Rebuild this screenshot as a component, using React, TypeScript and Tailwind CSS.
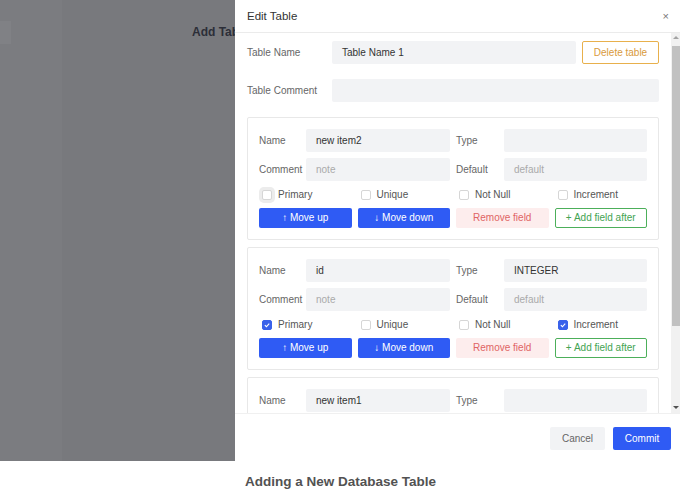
import React from "react";

type Field = {
  name: string;
  type: string;
  primary: boolean;
  increment: boolean;
  focus?: boolean;
};

const fields: Field[] = [
  { name: "new item2", type: "", primary: false, increment: false, focus: true },
  { name: "id", type: "INTEGER", primary: true, increment: true },
  { name: "new item1", type: "", primary: false, increment: false },
];

function Check({ checked, label, focus }: { checked: boolean; label: string; focus?: boolean }) {
  return (
    <div className="flex items-center gap-[6px] pl-[3px] text-[10px] leading-[12px] text-[#555]">
      <span
        className={`flex h-[10px] w-[10px] items-center justify-center rounded-[2px] border ${
          checked ? "border-[#3a62ea] bg-[#3a62ea]" : "border-[#d6d6d6] bg-white"
        } ${focus ? "ring-[3px] ring-[#ececec]" : ""}`}
      >
        {checked && (
          <svg width="8" height="8" viewBox="0 0 10 10" fill="none">
            <path d="M2.3 5.2 4.3 7.2 7.8 3.2" stroke="white" strokeWidth="1.4" />
          </svg>
        )}
      </span>
      {label}
    </div>
  );
}

function Input({ value, placeholder }: { value?: string; placeholder?: string }) {
  return (
    <div className="flex h-[23px] flex-1 items-center rounded-[2px] bg-[#f2f3f5] px-[10px] text-[10px] leading-[12px]">
      {value ? <span className="text-[#333]">{value}</span> : <span className="text-[#aaa]">{placeholder}</span>}
    </div>
  );
}

function FieldCard({ f }: { f: Field }) {
  return (
    <div className="flex shrink-0 flex-col gap-[6px] rounded-[2px] border border-[#e8e8e8] p-[11px]">
      <div className="grid grid-cols-2 gap-[6px] text-[10px] leading-[12px] text-[#666]">
        <div className="flex items-center">
          <span className="w-[47px]">Name</span>
          <Input value={f.name} />
        </div>
        <div className="flex items-center">
          <span className="w-[48px]">Type</span>
          <Input value={f.type} />
        </div>
        <div className="flex items-center">
          <span className="w-[47px]">Comment</span>
          <Input placeholder="note" />
        </div>
        <div className="flex items-center">
          <span className="w-[48px]">Default</span>
          <Input placeholder="default" />
        </div>
      </div>
      <div className="grid h-[15px] grid-cols-4 gap-[6px]">
        <Check checked={f.primary} label="Primary" focus={f.focus} />
        <Check checked={false} label="Unique" />
        <Check checked={false} label="Not Null" />
        <Check checked={f.increment} label="Increment" />
      </div>
      <div className="grid grid-cols-4 gap-[6px] text-[10px] leading-[12px]">
        <button className="h-[20px] rounded-[2px] bg-[#2f5bf4] text-white">↑ Move up</button>
        <button className="h-[20px] rounded-[2px] bg-[#2f5bf4] text-white">↓ Move down</button>
        <button className="h-[20px] rounded-[2px] bg-[#fdeded] text-[#e06464]">Remove field</button>
        <button className="h-[20px] rounded-[2px] border border-[#4caf5a] bg-white text-[#43a352]">+ Add field after</button>
      </div>
    </div>
  );
}

export default function App() {
  return (
    <div className="flex h-[492px] w-[680px] flex-col overflow-hidden bg-white font-['Liberation_Sans',Arial,sans-serif]">
      <div className="flex h-[461px] shrink-0">
        {/* dimmed page behind the drawer */}
        <div className="flex w-[235px] shrink-0">
          <div className="w-[62px] bg-[#7b7c80] pt-[21px]">
            <div className="h-[23px] w-[11px] bg-[#808185]" />
          </div>
          <div className="flex-1 overflow-hidden whitespace-nowrap bg-[#78797d] pl-[130px] pt-[25px] text-[12px] leading-[14px] font-bold text-[#2c2e38]">
            Add Table
          </div>
        </div>

        {/* drawer */}
        <div className="flex flex-1 flex-col bg-white">
          <div className="flex h-[33px] shrink-0 items-center justify-between border-b border-[#ebebeb] pl-[12px] pr-[11px]">
            <span className="text-[11.5px] leading-[14px] text-[#333]">Edit Table</span>
            <span className="text-[11px] leading-[14px] text-[#777]">×</span>
          </div>

          <div className="flex h-[380px] shrink-0">
            <div className="flex flex-1 flex-col gap-[15px] overflow-hidden px-[12px] pt-[8px]">
              <div className="flex shrink-0 items-center text-[10px] leading-[12px]">
                <span className="w-[85px] text-[#666]">Table Name</span>
                <Input value="Table Name 1" />
                <button className="ml-[6px] h-[23px] w-[77px] rounded-[2px] border border-[#e8b04c] text-[#d99a3c]">
                  Delete table
                </button>
              </div>
              <div className="flex shrink-0 items-center text-[10px] leading-[12px]">
                <span className="w-[85px] text-[#666]">Table Comment</span>
                <Input />
              </div>
              <div className="flex flex-col gap-[7px]">
                {fields.map((f) => (
                  <FieldCard key={f.name} f={f} />
                ))}
              </div>
            </div>
            {/* scrollbar */}
            <div className="flex w-[9px] flex-col items-center bg-[#f1f1f1]">
              <div className="mt-[3px] h-0 w-0 border-x-[3px] border-b-[3px] border-x-transparent border-b-[#a3a3a3]" />
              <div className="mt-[7px] h-[280px] w-[8px] bg-[#c1c1c1]" />
              <div className="mt-auto mb-[4px] h-0 w-0 border-x-[3px] border-t-[3px] border-x-transparent border-t-[#505050]" />
            </div>
          </div>

          <div className="flex flex-1 items-start justify-end gap-[8px] border-t border-[#f0f0f0] pr-[9px] pt-[13px] text-[10px] leading-[12px]">
            <button className="h-[23px] w-[55px] rounded-[2px] bg-[#f2f3f5] text-[#666]">Cancel</button>
            <button className="h-[23px] w-[58px] rounded-[2px] bg-[#2f5bf4] text-white">Commit</button>
          </div>
        </div>
      </div>

      <div className="pl-[245px] pt-[13px] text-[13.5px] leading-[16px] font-bold text-[#525252]">
        Adding a New Database Table
      </div>
    </div>
  );
}
